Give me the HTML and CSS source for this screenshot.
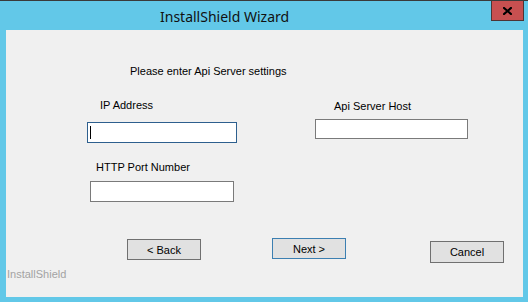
FILE: index.html
```html
<!DOCTYPE html>
<html lang="en">
<head>
  <meta charset="UTF-8" />
  <title>InstallShield Wizard</title>
  <link rel="stylesheet" href="styles.css">
</head>
<body>

  <div class="window">
    <div class="titlebar">
      <div class="title">InstallShield Wizard</div>
      <div class="close-btn">
        <svg width="9" height="8" viewBox="0 0 9 8">
          <path d="M1 1 L8 7 M8 1 L1 7" stroke="#000" stroke-width="2.2" stroke-linecap="square" fill="none"/>
        </svg>
      </div>
    </div>

    <div class="client">
      <div class="heading">Please enter Api Server settings</div>

      <div class="fields">
        <div class="col col-left">
          <div class="label label-ip">IP Address</div>
          <div class="field field-ip focused"><span class="caret"></span></div>
          <div class="label label-port">HTTP Port Number</div>
          <div class="field field-port"></div>
        </div>
        <div class="col col-right">
          <div class="label label-host">Api Server Host</div>
          <div class="field field-host"></div>
        </div>
      </div>

      <div class="buttons">
        <div class="btn btn-back">&lt; Back</div>
        <div class="btn btn-next default">Next &gt;</div>
        <div class="btn btn-cancel">Cancel</div>
      </div>

      <div class="brand">InstallShield</div>
    </div>
  </div>

</body>
</html>
```

FILE: styles.css
```css
body {
  margin: 0;
  background: #62c8e8;
  font-family: "Liberation Sans", Arial, sans-serif;
  font-size: 11px;
  color: #000;
}

.window {
  width: 528px;
  height: 302px;
  display: flex;
  flex-direction: column;
  border-top: 1px solid #3a3a3a;
  box-sizing: border-box;
}

.titlebar {
  height: 29px;
  display: flex;
  align-items: center;
  position: relative;
}

.title {
  margin-left: 160px;
  font-family: "Noto Sans", "Open Sans", sans-serif;
  font-size: 14px;
  color: #111;
  margin-top: 1px;
}

.close-btn {
  position: absolute;
  top: 0;
  right: 4px;
  width: 31px;
  height: 19px;
  background: #c75050;
  border: 1px solid #4e3434;
  border-top: none;
  display: flex;
  align-items: center;
  justify-content: center;
}

.client {
  flex: 1;
  margin: 0 5px 5px 6px;
  background: #f0f0f0;
  display: flex;
  flex-direction: column;
}

.heading {
  line-height: 13px;
  margin-top: 35px;
  margin-left: 124px;
}

.label {
  line-height: 13px;
}

.fields {
  display: flex;
  align-items: flex-start;
}

.col {
  display: flex;
  flex-direction: column;
  align-items: flex-start;
}

.col-left {
  width: 309px;
}

.label-ip {
  margin-top: 21px;
  margin-left: 94px;
}

.field {
  background: #fff;
  border: 1px solid #7a7a7a;
  box-sizing: border-box;
  position: relative;
}

.field.focused {
  border-color: #2d5f8e;
}

.field-ip {
  margin-top: 10px;
  margin-left: 81px;
  width: 150px;
  height: 21px;
}

.caret {
  position: absolute;
  left: 2px;
  top: 3px;
  width: 1px;
  height: 13px;
  background: #000;
}

.label-port {
  margin-top: 18px;
  margin-left: 90px;
}

.field-port {
  margin-top: 7px;
  margin-left: 84px;
  width: 144px;
  height: 21px;
}

.label-host {
  margin-top: 22px;
  margin-left: 19px;
}

.field-host {
  margin-top: 6px;
  width: 153px;
  height: 20px;
}

.buttons {
  display: flex;
  align-items: flex-start;
  margin-top: 36px;
}

.btn {
  width: 74px;
  height: 21px;
  box-sizing: border-box;
  border: 1px solid #707070;
  background: #e1e1e1;
  display: flex;
  align-items: center;
  justify-content: center;
}

.btn.default {
  border-color: #3c7fb1;
}

.btn-back {
  margin-top: 1px;
  margin-left: 121px;
}

.btn-next {
  margin-left: 71px;
}

.btn-cancel {
  margin-top: 3px;
  margin-left: 84px;
  height: 22px;
}

.brand {
  margin-top: 5px;
  margin-left: 1px;
  line-height: 13px;
  color: #a3a3a3;
}
```
